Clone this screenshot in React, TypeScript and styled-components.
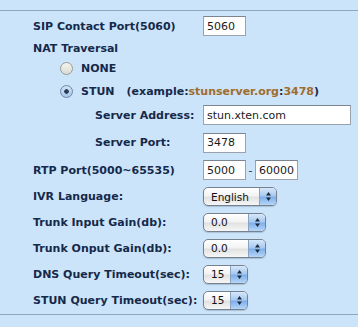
import styled, { createGlobalStyle } from 'styled-components'

const GlobalStyle = createGlobalStyle`
  html, body {
    margin: 0;
    padding: 0;
    background: #cce4f9;
  }
  body {
    font-family: 'DejaVu Sans', Verdana, sans-serif;
  }
`

const Page = styled.div`
  width: 358px;
  height: 327px;
  padding-top: 10px;
  box-sizing: border-box;
  background: #cce4f9;
`

const Panel = styled.div`
  border-top: 1px solid #8ea6bf;
  border-bottom: 1px solid #8ea6bf;
  padding-bottom: 1px;
`

const Row = styled.div<{ h: number }>`
  display: grid;
  grid-template-columns: 170px 1fr;
  align-items: center;
  height: ${({ h }) => h}px;
  padding-left: 33px;
`

const Label = styled.div<{ indent?: number }>`
  font-size: 11px;
  font-weight: bold;
  color: #15294a;
  white-space: nowrap;
  padding-left: ${({ indent }) => indent ?? 0}px;
`

const RadioRow = styled.div<{ h: number }>`
  display: flex;
  align-items: center;
  height: ${({ h }) => h}px;
  padding-left: 60px;
  font-size: 11px;
  font-weight: bold;
  color: #15294a;
  white-space: nowrap;
`

const Radio = styled.span<{ checked?: boolean }>`
  width: 13px;
  height: 13px;
  box-sizing: border-box;
  border-radius: 50%;
  border: 1px solid ${({ checked }) => (checked ? '#6d86a8' : '#9a9a9a')};
  background: ${({ checked }) =>
    checked
      ? 'radial-gradient(circle at 50% 50%, #2b3a55 0 2px, transparent 2.5px), linear-gradient(#cfe2f6, #a9c8ea)'
      : 'linear-gradient(#f4f4ee, #dcdcd4)'};
  margin-right: 8px;
  flex: none;
`

const Example = styled.span`
  margin-left: 12px;
`

const Link = styled.span`
  color: #a06c2e;
`

const Controls = styled.div`
  display: flex;
  align-items: center;
`

const Input = styled.input<{ w: number }>`
  width: ${({ w }) => w}px;
  height: 20px;
  box-sizing: border-box;
  border: 1px solid #9aa3ad;
  border-top-color: #7c858f;
  background: #fff;
  padding: 0 0 0 3px;
  margin: 0;
  font-family: 'DejaVu Sans', sans-serif;
  font-size: 11px;
  color: #1a1a1a;
  outline: none;
`

const Dash = styled.span`
  width: 9px;
  text-align: center;
  font-size: 11px;
  color: #333;
`

const Select = styled.div<{ w: number }>`
  position: relative;
  width: ${({ w }) => w}px;
  height: 19px;
  box-sizing: border-box;
  border: 1px solid #76818f;
  border-radius: 5px;
  background: linear-gradient(#ffffff 0%, #f3f3f3 45%, #e2e2e2 55%, #f6f6f6 100%);
  display: flex;
  align-items: center;
  overflow: hidden;
  box-shadow: 0 1px 1px rgba(60, 80, 110, 0.25);
`

const SelectText = styled.span`
  flex: 1;
  padding-left: 7px;
  font-family: 'DejaVu Sans', sans-serif;
  font-size: 10.5px;
  color: #111;
`

const Stepper = styled.span`
  width: 16px;
  height: 100%;
  border-left: 1px solid #8aa3c4;
  background: linear-gradient(#d6e7fa 0%, #a9c9ef 45%, #7fb0ea 55%, #b7d6f8 100%);
  display: flex;
  align-items: center;
  justify-content: center;
`

const Arrows = () => (
  <svg width="7" height="11" viewBox="0 0 7 11">
    <path d="M3.5 1 L6 4.5 L1 4.5 Z" fill="#1d2a3c" />
    <path d="M3.5 10 L6 6.5 L1 6.5 Z" fill="#1d2a3c" />
  </svg>
)

const DropDown = ({ value, width }: { value: string; width: number }) => (
  <Select w={width}>
    <SelectText>{value}</SelectText>
    <Stepper>
      <Arrows />
    </Stepper>
  </Select>
)

export default function App() {
  return (
    <Page>
      <GlobalStyle />
      <Panel>
        <Row h={30}>
          <Label>SIP Contact Port(5060)</Label>
          <Controls>
            <Input w={43} defaultValue="5060" />
          </Controls>
        </Row>
        <Row h={14}>
          <Label>NAT Traversal</Label>
        </Row>
        <RadioRow h={26}>
          <Radio />
          NONE
        </RadioRow>
        <RadioRow h={20}>
          <Radio checked />
          STUN
          <Example>
            (example:<Link>stunserver.org</Link>:<Link>3478</Link>)
          </Example>
        </RadioRow>
        <Row h={28}>
          <Label indent={62}>Server Address:</Label>
          <Controls>
            <Input w={148} defaultValue="stun.xten.com" />
          </Controls>
        </Row>
        <Row h={27}>
          <Label indent={62}>Server Port:</Label>
          <Controls>
            <Input w={43} defaultValue="3478" />
          </Controls>
        </Row>
        <Row h={28}>
          <Label>RTP Port(5000~65535)</Label>
          <Controls>
            <Input w={43} defaultValue="5000" />
            <Dash>-</Dash>
            <Input w={43} defaultValue="60000" />
          </Controls>
        </Row>
        <Row h={25}>
          <Label>IVR Language:</Label>
          <Controls>
            <DropDown value="English" width={74} />
          </Controls>
        </Row>
        <Row h={26}>
          <Label>Trunk Input Gain(db):</Label>
          <Controls>
            <DropDown value="0.0" width={63} />
          </Controls>
        </Row>
        <Row h={26}>
          <Label>Trunk Onput Gain(db):</Label>
          <Controls>
            <DropDown value="0.0" width={63} />
          </Controls>
        </Row>
        <Row h={26}>
          <Label>DNS Query Timeout(sec):</Label>
          <Controls>
            <DropDown value="15" width={45} />
          </Controls>
        </Row>
        <Row h={26}>
          <Label>STUN Query Timeout(sec):</Label>
          <Controls>
            <DropDown value="15" width={45} />
          </Controls>
        </Row>
      </Panel>
    </Page>
  )
}
